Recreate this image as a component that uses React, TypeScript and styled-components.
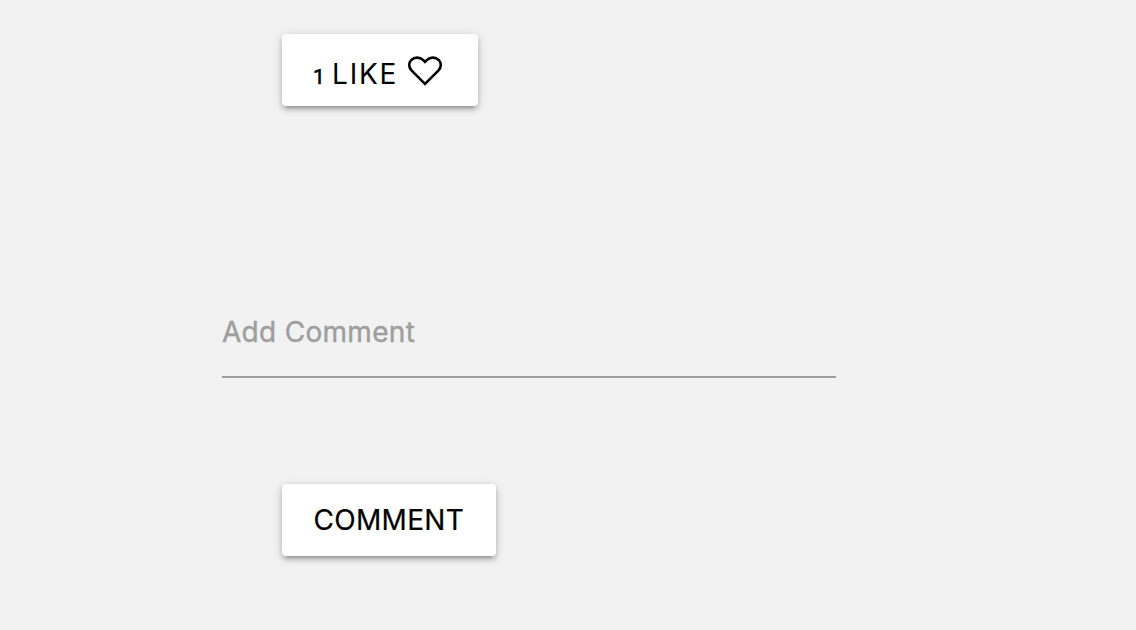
import React from "react";
import styled, { createGlobalStyle } from "styled-components";

const GlobalStyle = createGlobalStyle`
  * { box-sizing: border-box; }
  body {
    margin: 0;
    background: #f2f2f2;
    font-family: Inter, Roboto, "Liberation Sans", sans-serif;
  }
`;

const Page = styled.main`
  display: flex;
  flex-direction: column;
  align-items: flex-start;
  min-height: 630px;
  padding: 34px 0 0 222px;
  background: #f2f2f2;
`;

const Button = styled.button<{ $width: number }>`
  display: flex;
  align-items: center;
  width: ${(p) => p.$width}px;
  height: 72px;
  margin: 0 0 0 60px;
  padding: 0 0 0 31px;
  border: 0;
  border-radius: 4px;
  background: #fff;
  color: #000;
  font-family: inherit;
  font-size: 28px;
  line-height: 72px;
  white-space: nowrap;
  box-shadow: 0 4px 4px rgba(0, 0, 0, 0.14), 0 6px 2px -4px rgba(0, 0, 0, 0.12),
    0 2px 10px rgba(0, 0, 0, 0.2);
`;

const LikeLabel = styled.span`
  display: flex;
  align-items: baseline;
  flex: none;
  width: 94px;
  padding-top: 10px;
  letter-spacing: 1.8px;
`;

const Count = styled.span`
  flex: none;
  width: 19px;
  text-align: left;
  font-family: Roboto, sans-serif;
  font-size: 21px;
  letter-spacing: 0;
  -webkit-text-stroke: 0.6px #000;
`;

const Heart = styled.svg`
  flex: none;
  width: 36px;
  height: 32px;
  margin-top: 2px;
`;

const Label = styled.span`
  padding-left: 0.5px;
  letter-spacing: 0.3px;
  -webkit-text-stroke: 0.2px #000;
`;

const CommentInput = styled.input`
  width: 614px;
  height: 90px;
  margin: 182px 0 106px;
  padding: 0;
  border: 0;
  border-bottom: 2px solid #9e9e9e;
  border-radius: 0;
  outline: none;
  background: transparent;
  color: #000;
  font-family: inherit;
  font-size: 28px;
  letter-spacing: 0.3px;
  &::placeholder {
    color: #9e9e9e;
    opacity: 1;
    -webkit-text-stroke: 0.4px #9e9e9e;
  }
`;

export default function App() {
  return (
    <>
      <GlobalStyle />
      <Page>
        <Button type="button" $width={196}>
          <LikeLabel>
            <Count>1</Count>
            <span>LIKE</span>
          </LikeLabel>
          <Heart viewBox="0 0 36 32" aria-hidden="true">
            <path
              d="M18 28.8 4.7 15.6C1.4 12.3 1.5 7.8 4.2 5.1 7.4 1.9 12.7 1.7 16 4.9L18 6.9 20 4.9C23.3 1.7 28.6 1.9 31.8 5.1 34.5 7.8 34.6 12.3 31.3 15.6Z"
              fill="none"
              stroke="#000"
              strokeWidth="2.6"
            />
          </Heart>
        </Button>
        <CommentInput type="text" placeholder="Add Comment" />
        <Button type="button" $width={214}>
          <Label>COMMENT</Label>
        </Button>
      </Page>
    </>
  );
}
